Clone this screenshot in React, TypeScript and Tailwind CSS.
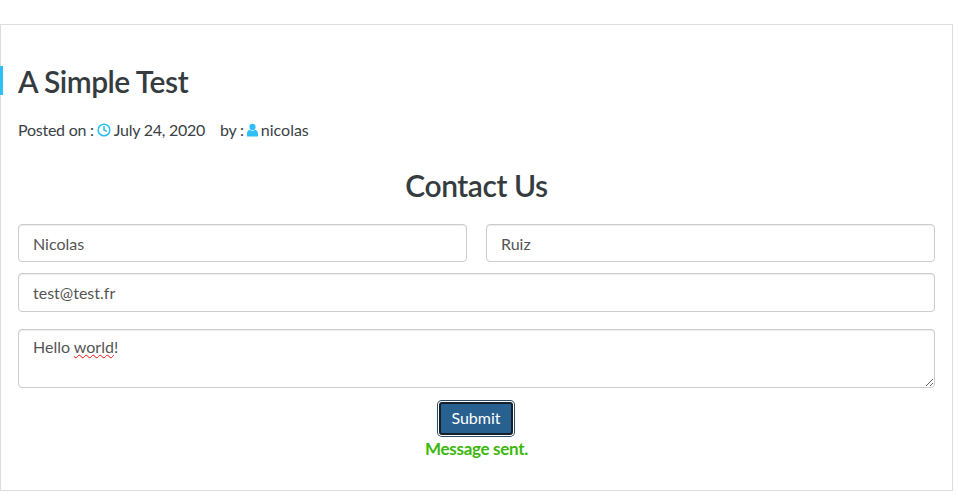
import { Clock } from "lucide-react";

const inputClass =
  "h-[38px] w-full rounded-[4px] border border-[#ccc] bg-white px-[14px] text-[16px] text-[#555] shadow-[inset_0_1px_1px_rgba(0,0,0,0.075)] outline-none";

export default function App() {
  return (
    <div className="h-[500px] w-[958px] overflow-hidden bg-white pt-6 font-['Lato','Liberation_Sans',sans-serif] text-[#3a4145]">
      <article className="h-[467px] w-[953px] border border-[#ddd] pt-[41px]">
        {/* Post title */}
        <h1 className="-ml-px h-[29px] border-l-[3px] border-[#2dbff5] pl-[15px] text-[30px] leading-[31px] font-semibold tracking-[-0.5px] text-[#353c40]">
          A Simple Test
        </h1>

        {/* Meta */}
        <div className="mt-[25px] flex h-[20px] items-center pl-[17px] text-[16px] leading-[20px] tracking-[-0.25px]">
          <span>Posted on :</span>
          <Clock className="mr-[3px] ml-[3px] h-[14px] w-[14px] text-[#2dbff5]" strokeWidth={2.6} />
          <span>July 24, 2020</span>
          <span className="ml-[15px]">by :</span>
          <svg viewBox="0 0 12 14" className="mr-[3px] ml-[3px] h-[14px] w-[11px] fill-[#2dbff5]">
            <circle cx="6" cy="3.6" r="3.4" />
            <path d="M0.5 14c-.4 0-.5-.3-.5-.7V11c0-2.4 1.3-3.9 3-4.3.9.7 1.9 1 3 1s2.100-.3 3-1c1.700.4 3 1.900 3 4.300v2.300c0 .4-.1.700-.5.700z" />
          </svg>
          <span className="tracking-normal">nicolas</span>
        </div>

        <form className="px-[17px]">
          <h2 className="mt-[28px] h-[34px] text-center text-[30px] leading-[34px] font-semibold tracking-[-0.45px] text-[#353c40]">
            Contact Us
          </h2>

          <div className="mt-[22px] flex gap-[19px]">
            <input className={inputClass} defaultValue="Nicolas" />
            <input className={inputClass} defaultValue="Ruiz" />
          </div>
          <input className={`${inputClass} mt-[11px] block h-[39px]`} defaultValue="test@test.fr" />

          {/* Message, with the browser's spell check mark laid over it */}
          <div className="relative mt-[17px] h-[59px]">
            <textarea
              spellCheck={false}
              className="block h-[59px] w-full resize-y rounded-[4px] border border-[#ccc] bg-white px-[14px] py-[6px] text-[16px] leading-[22px] text-[#555] shadow-[inset_0_1px_1px_rgba(0,0,0,0.075)] outline-none"
              defaultValue="Hello world!"
            />
            <div className="pointer-events-none absolute top-[7px] left-[15px] text-[16px] leading-[22px] text-transparent">
              Hello <span className="underline decoration-[#f01010] decoration-wavy decoration-1">world</span>!
            </div>
          </div>

          <div className="mt-[14px] flex justify-center pr-[1px]">
            <button
              type="button"
              className="h-[33px] w-[74px] rounded-[3px] border-2 border-[#14202c] bg-[#286090] pb-[2px] text-[16px] text-white shadow-[0_0_0_1px_#fff,0_0_0_2px_#2f4a63]"
            >
              Submit
            </button>
          </div>
          <p className="mt-[2px] text-center text-[17px] leading-[24px] font-bold tracking-[-0.3px] text-[#3cb80c]">
            Message sent.
          </p>
        </form>
      </article>
    </div>
  );
}
